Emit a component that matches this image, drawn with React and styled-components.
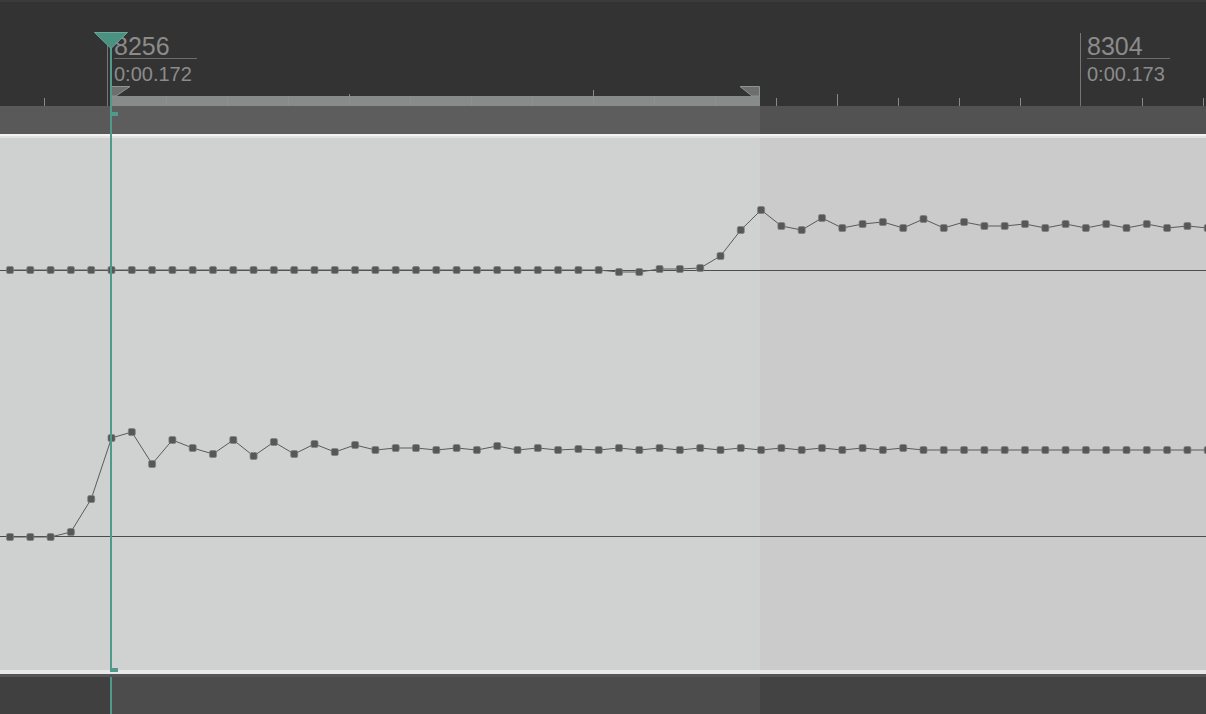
import React from "react";
import styled, { createGlobalStyle } from "styled-components";

const GlobalStyle = createGlobalStyle`
  html, body {
    margin: 0;
    padding: 0;
    background: #333333;
  }
  body {
    font-family: "Liberation Sans", Arial, sans-serif;
    overflow: hidden;
  }
`;

// timeline geometry (page pixels)
const SEL_START = 110;
const SEL_END = 760;
const X0 = 111.5; // sample 8256
const STEP = 20.3;
const FIRST = -5;

// sample values, one per sample from 8251 on
const CH1 = [
  ...Array(30).fill(270),
  272, 272, 269, 269, 268, 256, 230, 210, 226, 230,
  218, 228, 224, 222, 228, 219, 228, 222, 226, 226,
  224, 228, 224, 228, 224, 228, 224, 228, 226, 228,
];

const CH2 = [
  537, 537, 537, 532, 499,
  438, 432, 464, 440, 448, 454, 440, 456, 442, 454,
  444, 452, 445, 450, 448, 448, 450, 448, 450, 446,
  450, 448, 450, 449, 450, 448, 450, 448, 450, 448,
  450, 448, 450, 448, 450, 448, 450, 448, 450, 448,
  ...Array(15).fill(450),
];

const ZERO = [270.5, 536.5];

// ruler ticks every 61px, skipping the two under the markers
const TICKS = Array.from({ length: 20 }, (_, k) => ({ k, x: 44 + 61 * k })).filter(
  (t) => t.k !== 1 && t.k !== 17
);

const tickTop = (k) => (k === 9 ? 90 : k % 4 === 1 ? 94 : 98);

const Root = styled.div`
  position: relative;
  width: 1206px;
  height: 714px;
  display: flex;
  flex-direction: column;
  overflow: hidden;
  background: #333333;
`;

const Ruler = styled.div`
  position: relative;
  flex: none;
  height: 106px;
  background: #333333;
  box-shadow: inset 0 2px 0 #3b3b3b;
`;

const Scale = styled.svg`
  position: absolute;
  left: 0;
  top: 0;
`;

const SelectionBar = styled.div`
  position: absolute;
  left: ${(p) => p.$x}px;
  width: ${(p) => p.$w}px;
  bottom: 0;
  height: 10px;
  background: #878c8b;
`;

const Marker = styled.div`
  position: absolute;
  top: 33px;
  bottom: 0;
  left: ${(p) => p.$x}px;
  padding-left: 6px;
  border-left: 1px solid #767676;
`;

const SampleNum = styled.div`
  margin-top: 1px;
  width: 83px;
  height: 24px;
  font-size: 25px;
  line-height: 24px;
  color: #8b8b8b;
  border-bottom: 1px solid #6c6c6c;
`;

const TimeCode = styled.div`
  margin-top: 5px;
  font-size: 20px;
  line-height: 20px;
  color: #8b8b8b;
`;

const Lane = styled.div`
  position: relative;
  flex: none;
  display: flex;
  height: ${(p) => p.$h}px;
`;

const Seg = styled.div`
  flex: ${(p) => (p.$w ? "none" : 1)};
  width: ${(p) => (p.$w ? `${p.$w}px` : "auto")};
  background: ${(p) => p.$bg};
`;

const Edge = styled.div`
  flex: none;
  height: ${(p) => p.$h}px;
  background: ${(p) => p.$bg};
  border-bottom: ${(p) => (p.$under ? `2px solid ${p.$under}` : "none")};
`;

const Wave = styled.svg`
  position: absolute;
  left: 0;
  top: 0;
`;

const CursorLine = styled.div`
  position: absolute;
  left: 110px;
  width: 2px;
  top: ${(p) => p.$top}px;
  height: ${(p) => p.$h}px;
  background: #4f9a89;
`;

const CursorFlag = styled.div`
  position: absolute;
  left: 110px;
  top: ${(p) => p.$top}px;
  width: 8px;
  height: 4px;
  background: #4f9a89;
`;

const CursorHead = styled.svg`
  position: absolute;
  left: 93px;
  top: 31px;
`;

function Channel({ values }) {
  const pts = values.map((y, i) => [X0 + (FIRST + i) * STEP, y]);
  return (
    <g>
      <polyline
        points={pts.map((p) => p.join(",")).join(" ")}
        fill="none"
        stroke="#5a5a5a"
        strokeWidth="1"
      />
      {pts.map(([x, y], i) => (
        <rect
          key={i}
          x={x - 3.5}
          y={y - 3.5}
          width="7"
          height="7"
          rx="1.6"
          fill="#575757"
          stroke="#808080"
          strokeWidth="0.7"
        />
      ))}
    </g>
  );
}

function Band({ h, tones }) {
  return (
    <Lane $h={h}>
      <Seg $w={SEL_START} $bg={tones[0]} />
      <Seg $w={SEL_END - SEL_START} $bg={tones[1]} />
      <Seg $bg={tones[2]} />
    </Lane>
  );
}

export default function App() {
  return (
    <Root>
      <GlobalStyle />

      <Ruler>
        <Scale width="1206" height="106" viewBox="0 0 1206 106">
          {TICKS.map((t) => (
            <line
              key={t.k}
              x1={t.x + 0.5}
              x2={t.x + 0.5}
              y1={tickTop(t.k)}
              y2="106"
              stroke="#8a8a8a"
              strokeWidth="1"
            />
          ))}
        </Scale>

        <SelectionBar $x={SEL_START} $w={SEL_END - SEL_START} />

        <Scale width="1206" height="106" viewBox="0 0 1206 106">
          {TICKS.filter((t) => t.x > SEL_START && t.x < SEL_END).map((t) => (
            <line
              key={t.k}
              x1={t.x + 0.5}
              x2={t.x + 0.5}
              y1="96"
              y2="106"
              stroke="#8c9190"
              strokeWidth="1"
            />
          ))}
          <polygon
            points="111,86.5 130,86.5 116,96 111,96"
            fill="#6d6f6f"
            stroke="#8f9393"
            strokeWidth="1"
          />
          <polygon
            points="740,86.5 759.5,86.5 759.5,96 752,96"
            fill="#6d6f6f"
            stroke="#8f9393"
            strokeWidth="1"
          />
        </Scale>

        <Marker $x={107}>
          <SampleNum>8256</SampleNum>
          <TimeCode>0:00.172</TimeCode>
        </Marker>
        <Marker $x={1080}>
          <SampleNum>8304</SampleNum>
          <TimeCode>0:00.173</TimeCode>
        </Marker>
      </Ruler>

      <Band h={28} tones={["#595959", "#5d5d5d", "#525252"]} />
      <Edge $h={2} $bg="#f2f2f2" $under="#e2e2e2" />

      <Lane $h={532}>
        <Seg $w={SEL_START} $bg="#cfd1d0" />
        <Seg $w={SEL_END - SEL_START} $bg="#d0d2d1" />
        <Seg $bg="#cacbca" />
        <Wave width="1206" height="532" viewBox="0 138 1206 532">
          {ZERO.map((y) => (
            <line key={y} x1="0" x2="1206" y1={y} y2={y} stroke="#4c4c4c" strokeWidth="1" />
          ))}
          <Channel values={CH1} />
          <Channel values={CH2} />
        </Wave>
      </Lane>

      <Edge $h={4} $bg="#e8e8e8" />
      <Edge $h={3} $bg="#555555" />
      <Band h={37} tones={["#404040", "#4c4c4c", "#434343"]} />

      <CursorLine $top={33} $h={639} />
      <CursorLine $top={677} $h={37} />
      <CursorFlag $top={112} />
      <CursorFlag $top={668} />
      <CursorHead width="36" height="19" viewBox="0 0 36 19">
        <polygon
          points="1.5,1.5 34.5,1.5 18,17.5"
          fill="#4a9181"
          stroke="#6aa898"
          strokeWidth="1"
        />
      </CursorHead>
    </Root>
  );
}
